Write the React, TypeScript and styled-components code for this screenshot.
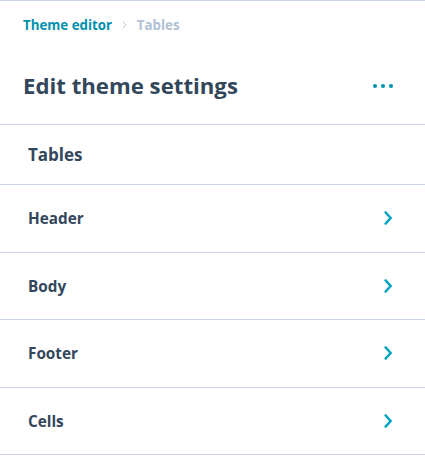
import styled, { createGlobalStyle } from "styled-components";

const GlobalStyle = createGlobalStyle`
  body {
    margin: 0;
    background: #ffffff;
    font-family: "Open Sans", "Noto Sans", sans-serif;
    color: #33475b;
  }
`;

const items = ["Header", "Body", "Footer", "Cells"];

const Panel = styled.div`
  width: 425px;
  border-top: 1px solid #cbd6e2;
`;

const Breadcrumbs = styled.nav`
  display: flex;
  align-items: center;
  gap: 10px;
  height: 48px;
  padding: 0 23px;
  font-size: 13.3px;
  font-weight: 700;
`;

const Crumb = styled.span<{ current?: boolean }>`
  color: ${({ current }) => (current ? "#b0c1d4" : "#0091ae")};
`;

const Separator = styled.span`
  display: inline-flex;
  color: #b0c1d4;
`;

const TitleBar = styled.header`
  display: flex;
  align-items: center;
  justify-content: space-between;
  height: 75px;
  padding: 0 32px 0 23px;
  border-bottom: 1px solid #cbd6e2;
`;

const Title = styled.h1`
  margin: 0 0 2px;
  font-size: 22.2px;
  font-weight: 700;
  color: #33475b;
`;

const MoreButton = styled.button`
  display: flex;
  gap: 4px;
  padding: 0;
  margin-bottom: 2px;
  border: none;
  background: none;
  cursor: pointer;

  span {
    width: 4px;
    height: 4px;
    border-radius: 50%;
    background: #0091ae;
  }
`;

const SectionTitle = styled.h2`
  display: flex;
  align-items: center;
  height: 59px;
  margin: 0;
  padding: 0 28px;
  font-size: 17px;
  font-weight: 700;
  border-bottom: 1px solid #cbd6e2;
`;

const Row = styled.button`
  display: flex;
  align-items: center;
  justify-content: space-between;
  box-sizing: border-box;
  width: 100%;
  height: 67.5px;
  padding: 0 33px 0 28px;
  border: none;
  border-bottom: 1px solid #cbd6e2;
  background: #ffffff;
  font-family: inherit;
  font-size: 15.3px;
  font-weight: 700;
  color: #33475b;
  cursor: pointer;
  text-align: left;
`;

const Chevron = ({ size = 14, color = "#00a4bd", width = 2.6 }) => (
  <svg width={size * 0.6} height={size} viewBox="0 0 8 14" fill="none">
    <path
      d="M1.5 1.5 L6.5 7 L1.5 12.5"
      stroke={color}
      strokeWidth={width}
      strokeLinecap="round"
      strokeLinejoin="round"
    />
  </svg>
);

export default function App() {
  return (
    <>
      <GlobalStyle />
      <Panel>
        <Breadcrumbs>
          <Crumb>Theme editor</Crumb>
          <Separator>
            <Chevron size={8} color="#b0c1d4" width={1.6} />
          </Separator>
          <Crumb current>Tables</Crumb>
        </Breadcrumbs>
        <TitleBar>
          <Title>Edit theme settings</Title>
          <MoreButton aria-label="More">
            <span />
            <span />
            <span />
          </MoreButton>
        </TitleBar>
        <SectionTitle>Tables</SectionTitle>
        {items.map((label) => (
          <Row key={label}>
            {label}
            <Chevron />
          </Row>
        ))}
      </Panel>
    </>
  );
}
